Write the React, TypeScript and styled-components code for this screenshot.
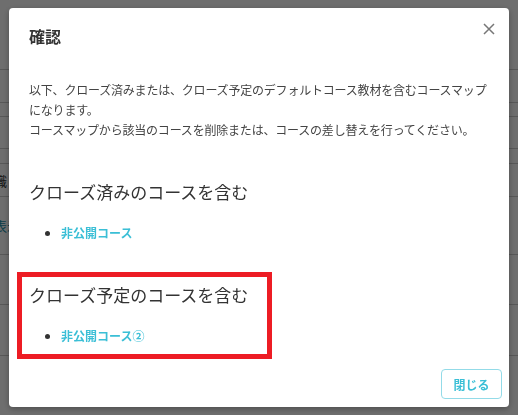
import React, { FC } from 'react'
import { createGlobalStyle, css, styled } from 'styled-components'

const GlobalStyle = createGlobalStyle`
    html, body {
        margin: 0;
        padding: 0;
        height: 100%;
        background: #ffffff;
        overflow: hidden;
    }
    body {
        font-family: "Noto Sans CJK JP", "Noto Sans", sans-serif;
        color: #333333;
    }
    *, *::before, *::after {
        box-sizing: border-box;
    }
`

// rows of the list page lying behind the dialog
const pageRows = [
    { height: 70 },
    { height: 33 },
    { height: 14 },
    { height: 32 },
    { height: 15 },
    { height: 33, label: '識' },
    { height: 58, label: '表示', link: true },
    { height: 50 },
    { height: 51 },
    { height: 60 },
]

const App: FC = () => {
    return (
        <>
            <GlobalStyle />
            <Page>
                {pageRows.map((row, i) => (
                    <Row key={i} $height={row.height}>
                        {row.label && <Cell $link={row.link}>{row.label}</Cell>}
                    </Row>
                ))}
            </Page>
            <Backdrop />
            <Dialog role="dialog">
                <Header>
                    <Title>確認</Title>
                    <CloseBtn aria-label="閉じる">
                        <svg width="12" height="12" viewBox="0 0 12 12">
                            <path d="M1 1 L11 11 M11 1 L1 11" stroke="#777" strokeWidth="1.5" fill="none" />
                        </svg>
                    </CloseBtn>
                </Header>
                <Body>
                    <Lead>
                        以下、クローズ済みまたは、クローズ予定のデフォルトコース教材を含むコースマップになります。
                        <br />
                        コースマップから該当のコースを削除または、コースの差し替えを行ってください。
                    </Lead>
                    <Section>
                        <SectionTitle>クローズ済みのコースを含む</SectionTitle>
                        <CourseList>
                            <li><CourseLink href="#">非公開コース</CourseLink></li>
                        </CourseList>
                    </Section>
                    <Section $marked>
                        <SectionTitle>クローズ予定のコースを含む</SectionTitle>
                        <CourseList>
                            <li><CourseLink href="#">非公開コース②</CourseLink></li>
                        </CourseList>
                    </Section>
                </Body>
                <Footer>
                    <Button>閉じる</Button>
                </Footer>
            </Dialog>
        </>
    )
}

export default App

const Page = styled.div`
    display: flex;
    flex-direction: column;
`
const Row = styled.div<{ $height: number }>`
    display: flex;
    align-items: center;
    height: ${({ $height }) => $height}px;
    border-bottom: 1px solid #cccccc;
    font-size: 13px;
`
const Cell = styled.span<{ $link?: boolean }>`
    margin-left: -6px;
    color: ${({ $link }) => ($link ? '#1f8fa8' : '#333333')};
`
const Backdrop = styled.div`
    position: fixed;
    inset: 0;
    background: rgba(0, 0, 0, 0.57);
`
const Dialog = styled.div`
    position: fixed;
    top: 8px;
    left: 9px;
    width: 500px;
    display: flex;
    flex-direction: column;
    background: #ffffff;
    border-radius: 4px;
    box-shadow: 0 2px 6px rgba(0, 0, 0, 0.3);
`
const Header = styled.div`
    display: flex;
    align-items: center;
    justify-content: space-between;
    padding: 18px 20px 16px;
`
const Title = styled.h2`
    margin: 0;
    font-size: 16px;
    line-height: 20px;
    font-weight: 700;
    color: #333333;
`
const CloseBtn = styled.button`
    position: absolute;
    top: 13px;
    right: 12px;
    width: 16px;
    height: 16px;
    padding: 0;
    border: none;
    background: none;
    display: flex;
    align-items: center;
    justify-content: center;
`
const Body = styled.div`
    display: flex;
    flex-direction: column;
    padding: 18px 20px 0;
`
const Lead = styled.p`
    margin: 0;
    font-size: 12px;
    line-height: 20px;
    letter-spacing: -0.2px;
    color: #444444;
`
const marked = css`
    &::after {
        content: '';
        position: absolute;
        top: -11px;
        left: -12px;
        width: 255px;
        height: 87px;
        border: 5px solid #ed1c24;
        pointer-events: none;
    }
`
const Section = styled.section<{ $marked?: boolean }>`
    position: relative;
    margin-top: 40px;
    display: flex;
    flex-direction: column;
    row-gap: 19px;
    ${({ $marked }) => $marked && marked}
`
const SectionTitle = styled.h3`
    margin: 0;
    font-size: 17px;
    line-height: 24px;
    font-weight: 400;
    color: #333333;
`
const CourseList = styled.ul`
    margin: 0;
    padding-left: 32px;
    list-style: disc;
    font-size: 12px;
    line-height: 20px;
    color: #333333;
`
const CourseLink = styled.a`
    color: #3bbfd6;
    font-weight: 700;
    text-decoration: none;
`
const Footer = styled.div`
    display: flex;
    justify-content: flex-end;
    padding: 23px 7px 8px;
`
const Button = styled.button`
    width: 61px;
    height: 30px;
    border: 1px solid #93dbe8;
    border-radius: 4px;
    background: #ffffff;
    color: #3bbfd6;
    font-family: "Noto Sans CJK JP", "Noto Sans", sans-serif;
    font-size: 12px;
    font-weight: 700;
`
